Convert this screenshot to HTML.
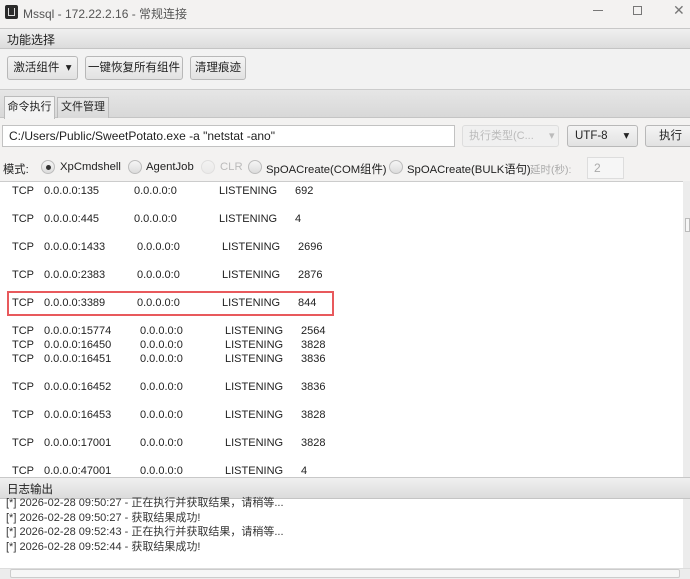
<!DOCTYPE html>
<html><head><meta charset="utf-8"><style>
*{margin:0;padding:0;box-sizing:border-box}
body{width:690px;height:579px;overflow:hidden;background:#f3f2f1;font-family:"Liberation Sans","Noto Sans CJK SC",sans-serif;font-size:12px;color:#222;position:relative}
.a{position:absolute;white-space:nowrap}
.m{font-size:11.3px}
.hdr{background:linear-gradient(#f0f0f0,#dcdcdc);border-top:1px solid #c8c8c8;border-bottom:1px solid #c4c4c4}
.btn{position:absolute;border:1px solid #b8b8b8;border-radius:3px;background:linear-gradient(#f4f4f4,#e2e2e2);text-align:center;font-size:11.5px}
.row span{position:absolute;font-size:11px;color:#222}
.rad{position:absolute;width:14px;height:14px;border-radius:50%;border:1px solid #bdbdbd;background:linear-gradient(#f5f5f5,#dcdcdc)}
</style></head><body>
<div class="a" style="left:5px;top:5px;width:13px;height:14px;background:#2b2b2b;border-radius:2px"></div>
<div class="a" style="left:8px;top:8px;width:7px;height:8px;border:1px solid #ddd;border-top:none"></div>
<div class="a" style="left:23px;top:5px;color:#555;font-size:12px">Mssql - 172.22.2.16 - 常规连接</div>
<div class="a" style="left:593px;top:10px;width:10px;height:1px;background:#777"></div>
<div class="a" style="left:633px;top:6px;width:9px;height:9px;border:1px solid #777"></div>
<div class="a" style="left:673px;top:2px;color:#777;font-size:14px">✕</div>
<div class="a hdr" style="left:0;top:28px;width:690px;height:21px"></div>
<div class="a" style="left:7px;top:31px;font-size:12px">功能选择</div>
<div class="a" style="left:0;top:49px;width:690px;height:40px;background:#f2f2f2"></div>
<div class="btn" style="left:7px;top:56px;width:71px;height:24px;line-height:22px">激活组件 &nbsp;▾</div>
<div class="btn" style="left:85px;top:56px;width:98px;height:24px;line-height:22px">一键恢复所有组件</div>
<div class="btn" style="left:190px;top:56px;width:56px;height:24px;line-height:22px">清理痕迹</div>
<div class="a" style="left:0;top:89px;width:690px;height:29px;background:linear-gradient(#e6e6e6,#d8d8d8);border-top:1px solid #ccc;border-bottom:1px solid #c4c4c4"></div>
<div class="a" style="left:4px;top:96px;width:51px;height:23px;background:#f3f3f3;border:1px solid #bbb;border-bottom:none;text-align:center;line-height:21px;font-size:11px">命令执行</div>
<div class="a" style="left:57px;top:97px;width:52px;height:21px;background:linear-gradient(#e9e9e9,#d9d9d9);border:1px solid #bbb;border-bottom:none;text-align:center;line-height:19px;font-size:11px">文件管理</div>
<div class="a" style="left:2px;top:125px;width:453px;height:22px;background:#fff;border:1px solid #c2c2c2;padding-left:6px;line-height:20px;font-size:12px">C:/Users/Public/SweetPotato.exe -a "netstat -ano"</div>
<div class="btn" style="left:462px;top:125px;width:97px;height:22px;line-height:20px;color:#bbb;border-color:#ddd;background:#f0f0f0;text-align:left;padding-left:6px;font-size:11px">执行类型(C... &nbsp;&nbsp;&nbsp;&nbsp;▾</div>
<div class="btn" style="left:567px;top:125px;width:71px;height:22px;line-height:20px;text-align:left;padding-left:7px">UTF-8 &nbsp;&nbsp;&nbsp;&nbsp;▾</div>
<div class="btn" style="left:645px;top:125px;width:50px;height:22px;line-height:20px;text-align:left;padding-left:13px">执行</div>
<div class="a m" style="left:3px;top:161px">模式:</div>
<div class="rad" style="left:41px;top:160px"></div><div class="a" style="left:46px;top:165px;width:5px;height:5px;border-radius:50%;background:#333"></div>
<div class="a m" style="left:60px;top:161px">XpCmdshell</div>
<div class="rad" style="left:128px;top:160px"></div><div class="a m" style="left:146px;top:161px">AgentJob</div>
<div class="rad" style="left:201px;top:160px;opacity:.35"></div><div class="a m" style="left:220px;top:161px;color:#bbb">CLR</div>
<div class="rad" style="left:248px;top:160px"></div><div class="a m" style="left:266px;top:161px">SpOACreate(COM组件)</div>
<div class="rad" style="left:389px;top:160px"></div><div class="a m" style="left:407px;top:161px">SpOACreate(BULK语句)</div>
<div class="a" style="left:530px;top:162px;color:#aaa;font-size:10.5px">延时(秒):</div>
<div class="a" style="left:587px;top:157px;width:37px;height:22px;border:1px solid #ddd;background:#f6f6f6;color:#aaa;padding-left:6px;line-height:20px">2</div>
<div class="a" style="left:0;top:181px;width:683px;height:296px;background:#fff;border-top:1px solid #ccc"></div>
<div class="a" style="left:683px;top:181px;width:7px;height:296px;background:#ececec"></div>
<div class="a" style="left:685px;top:218px;width:5px;height:14px;border:1px solid #bbb;background:#f6f6f6"></div>
<div class="row">
<span style="left:12px;top:185px">TCP</span><span style="left:44px;top:185px">0.0.0.0:135</span><span style="left:134px;top:185px">0.0.0.0:0</span><span style="left:219px;top:185px">LISTENING</span><span style="left:295px;top:185px">692</span>
<span style="left:12px;top:213px">TCP</span><span style="left:44px;top:213px">0.0.0.0:445</span><span style="left:134px;top:213px">0.0.0.0:0</span><span style="left:219px;top:213px">LISTENING</span><span style="left:295px;top:213px">4</span>
<span style="left:12px;top:241px">TCP</span><span style="left:44px;top:241px">0.0.0.0:1433</span><span style="left:137px;top:241px">0.0.0.0:0</span><span style="left:222px;top:241px">LISTENING</span><span style="left:298px;top:241px">2696</span>
<span style="left:12px;top:269px">TCP</span><span style="left:44px;top:269px">0.0.0.0:2383</span><span style="left:137px;top:269px">0.0.0.0:0</span><span style="left:222px;top:269px">LISTENING</span><span style="left:298px;top:269px">2876</span>
<span style="left:12px;top:297px">TCP</span><span style="left:44px;top:297px">0.0.0.0:3389</span><span style="left:137px;top:297px">0.0.0.0:0</span><span style="left:222px;top:297px">LISTENING</span><span style="left:298px;top:297px">844</span>
<span style="left:12px;top:325px">TCP</span><span style="left:44px;top:325px">0.0.0.0:15774</span><span style="left:140px;top:325px">0.0.0.0:0</span><span style="left:225px;top:325px">LISTENING</span><span style="left:301px;top:325px">2564</span>
<span style="left:12px;top:339px">TCP</span><span style="left:44px;top:339px">0.0.0.0:16450</span><span style="left:140px;top:339px">0.0.0.0:0</span><span style="left:225px;top:339px">LISTENING</span><span style="left:301px;top:339px">3828</span>
<span style="left:12px;top:353px">TCP</span><span style="left:44px;top:353px">0.0.0.0:16451</span><span style="left:140px;top:353px">0.0.0.0:0</span><span style="left:225px;top:353px">LISTENING</span><span style="left:301px;top:353px">3836</span>
<span style="left:12px;top:381px">TCP</span><span style="left:44px;top:381px">0.0.0.0:16452</span><span style="left:140px;top:381px">0.0.0.0:0</span><span style="left:225px;top:381px">LISTENING</span><span style="left:301px;top:381px">3836</span>
<span style="left:12px;top:409px">TCP</span><span style="left:44px;top:409px">0.0.0.0:16453</span><span style="left:140px;top:409px">0.0.0.0:0</span><span style="left:225px;top:409px">LISTENING</span><span style="left:301px;top:409px">3828</span>
<span style="left:12px;top:437px">TCP</span><span style="left:44px;top:437px">0.0.0.0:17001</span><span style="left:140px;top:437px">0.0.0.0:0</span><span style="left:225px;top:437px">LISTENING</span><span style="left:301px;top:437px">3828</span>
<span style="left:12px;top:465px">TCP</span><span style="left:44px;top:465px">0.0.0.0:47001</span><span style="left:140px;top:465px">0.0.0.0:0</span><span style="left:225px;top:465px">LISTENING</span><span style="left:301px;top:465px">4</span>
</div>
<div class="a" style="left:7px;top:291px;width:327px;height:25px;border:2px solid #e8595c"></div>
<div class="a hdr" style="left:0;top:477px;width:690px;height:22px"></div>
<div class="a" style="left:7px;top:481px;font-size:11.5px">日志输出</div>
<div class="a" style="left:0;top:499px;width:683px;height:69px;background:#fff"></div>
<div class="a" style="left:683px;top:499px;width:7px;height:69px;background:#ececec"></div>
<div class="a" style="left:6px;top:496px;font-size:11px;line-height:14.5px;color:#333">[*] 2026-02-28 09:50:27 - 正在执行并获取结果，请稍等...<br>[*] 2026-02-28 09:50:27 - 获取结果成功!<br>[*] 2026-02-28 09:52:43 - 正在执行并获取结果，请稍等...<br>[*] 2026-02-28 09:52:44 - 获取结果成功!</div>
<div class="a" style="left:0;top:568px;width:690px;height:11px;background:#ececec;border-top:1px solid #ddd"></div>
<div class="a" style="left:10px;top:569px;width:670px;height:9px;border:1px solid #ccc;border-radius:2px;background:#f6f6f6"></div>
</body></html>
